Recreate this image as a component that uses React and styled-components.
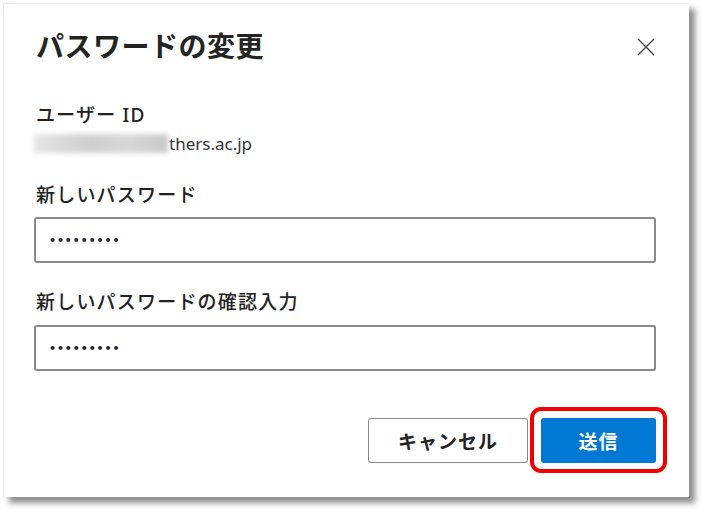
import React from "react";
import styled, { createGlobalStyle } from "styled-components";

const Global = createGlobalStyle`
  html, body { margin: 0; padding: 0; background: #ffffff; }
  body { font-family: "Noto Sans", "Noto Sans CJK JP", sans-serif; color: #1f1f1f; }
  * { box-sizing: border-box; }
`;

const Page = styled.div`
  width: 702px;
  height: 510px;
  padding: 3px 0 0 3px;
`;

const Dialog = styled.div`
  width: 686px;
  height: 494px;
  background: #fff;
  border-top: 1px solid #ececec;
  border-left: 1px solid #ececec;
  box-shadow: 6px 6px 6px rgba(0, 0, 0, 0.45);
  padding: 19px 33px 0 30px;
  display: flex;
  flex-direction: column;
`;

const Header = styled.div`
  display: flex;
  align-items: center;
  justify-content: space-between;
  height: 44px;
`;

const Title = styled.h1`
  margin: 0 0 0 2px;
  font-family: "Noto Sans CJK JP", sans-serif;
  font-size: 28px;
  font-weight: 600;
  letter-spacing: 0.5px;
  color: #242424;
`;

const CloseButton = styled.button`
  border: none;
  background: none;
  padding: 0;
  width: 24px;
  height: 24px;
  margin: 4px -2px 0 0;
  display: flex;
  align-items: center;
  justify-content: center;
  color: #444;
`;

const FieldLabel = styled.div`
  margin: ${(p) => p.$top}px 0 0 2px;
  font-family: "Noto Sans", "Noto Sans CJK JP", sans-serif;
  font-size: 19px;
  font-weight: 500;
  letter-spacing: 1.2px;
  line-height: 24px;
  color: #222;
`;

const IdValue = styled.div`
  display: flex;
  align-items: center;
  margin-top: 4px;
  height: 24px;
  font-size: 17px;
  color: #333;
`;

const Blurred = styled.span`
  display: inline-block;
  width: 134px;
  height: 19px;
  background: linear-gradient(90deg, #e6e6e6, #cfcfcf 40%, #d8d8d8 70%, #c9c9c9);
  filter: blur(2.5px);
  margin-right: 1px;
`;

const Input = styled.div`
  margin-top: ${(p) => p.$top}px;
  height: 46px;
  border: 2px solid #8a8a8a;
  border-radius: 3px;
  display: flex;
  align-items: center;
  padding-left: 13px;
  font-family: "DejaVu Sans", sans-serif;
  font-size: 11px;
  font-weight: bold;
  letter-spacing: 0.9px;
  color: #222;
`;

const Footer = styled.div`
  margin-top: 47px;
  display: flex;
  justify-content: flex-end;
  gap: 13px;
`;

const Button = styled.button`
  height: 45px;
  width: ${(p) => p.$w}px;
  border-radius: 3px;
  padding: 0;
  font-family: "Noto Sans CJK JP", sans-serif;
  font-size: 19px;
  font-weight: 700;
  letter-spacing: 1px;
  border: ${(p) => (p.$primary ? "none" : "1px solid #8a8a8a")};
  background: ${(p) => (p.$primary ? "#0078d4" : "#fff")};
  color: ${(p) => (p.$primary ? "#fff" : "#242424")};
`;

const Highlight = styled.div`
  position: relative;
  &::after {
    content: "";
    position: absolute;
    inset: -11px -11px -10px -11px;
    border: 4px solid #f00000;
    border-radius: 11px;
    pointer-events: none;
  }
`;

export default function App() {
  return (
    <Page>
      <Global />
      <Dialog>
        <Header>
          <Title>パスワードの変更</Title>
          <CloseButton aria-label="閉じる">
            <svg width="18" height="18" viewBox="0 0 18 18">
              <path d="M1 1 L17 17 M17 1 L1 17" stroke="#444" strokeWidth="1.4" fill="none" />
            </svg>
          </CloseButton>
        </Header>
        <FieldLabel $top={36}>ユーザー ID</FieldLabel>
        <IdValue>
          <Blurred />
          thers.ac.jp
        </IdValue>
        <FieldLabel $top={28}>新しいパスワード</FieldLabel>
        <Input $top={10}>•••••••••</Input>
        <FieldLabel $top={27}>新しいパスワードの確認入力</FieldLabel>
        <Input $top={11}>•••••••••</Input>
        <Footer>
          <Button $w={160}>キャンセル</Button>
          <Highlight>
            <Button $primary $w={115}>送信</Button>
          </Highlight>
        </Footer>
      </Dialog>
    </Page>
  );
}
